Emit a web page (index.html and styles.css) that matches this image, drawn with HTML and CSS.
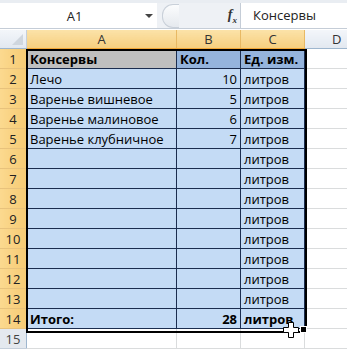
FILE: index.html
```html
<!DOCTYPE html>
<html lang="ru">
<head>
  <meta charset="UTF-8">
  <title>Консервы</title>
  <link rel="stylesheet" href="styles.css">
</head>
<body>
  <div class="fbar">
    <div class="namebox">
      <span class="ref">A1</span>
      <span class="drop"></span>
    </div>
    <div class="mid">
      <span class="knob"></span>
      <span class="fx">f<sub>x</sub></span>
    </div>
    <div class="formula">Консервы</div>
  </div>

  <div class="sheet">
    <table class="grid">
      <tr class="head">
        <th class="corner"><span class="tri"></span></th>
        <th class="sel colA">A</th>
        <th class="sel colB">B</th>
        <th class="sel colC">C</th>
        <th class="colD">D</th>
      </tr>
      <tr>
        <th class="rn">1</th>
        <td class="c title">Консервы</td>
        <td class="c title2">Кол.</td>
        <td class="c title2">Ед. изм.</td>
        <td class="g"></td>
      </tr>
      <tr><th class="rn">2</th><td class="c">Лечо</td><td class="c num">10</td><td class="c">литров</td><td class="g"></td></tr>
      <tr><th class="rn">3</th><td class="c">Варенье вишневое</td><td class="c num">5</td><td class="c">литров</td><td class="g"></td></tr>
      <tr><th class="rn">4</th><td class="c">Варенье малиновое</td><td class="c num">6</td><td class="c">литров</td><td class="g"></td></tr>
      <tr><th class="rn">5</th><td class="c">Варенье клубничное</td><td class="c num">7</td><td class="c">литров</td><td class="g"></td></tr>
      <tr><th class="rn">6</th><td class="c"></td><td class="c"></td><td class="c">литров</td><td class="g"></td></tr>
      <tr><th class="rn">7</th><td class="c"></td><td class="c"></td><td class="c">литров</td><td class="g"></td></tr>
      <tr><th class="rn">8</th><td class="c"></td><td class="c"></td><td class="c">литров</td><td class="g"></td></tr>
      <tr><th class="rn">9</th><td class="c"></td><td class="c"></td><td class="c">литров</td><td class="g"></td></tr>
      <tr><th class="rn">10</th><td class="c"></td><td class="c"></td><td class="c">литров</td><td class="g"></td></tr>
      <tr><th class="rn">11</th><td class="c"></td><td class="c"></td><td class="c">литров</td><td class="g"></td></tr>
      <tr><th class="rn">12</th><td class="c"></td><td class="c"></td><td class="c">литров</td><td class="g"></td></tr>
      <tr><th class="rn">13</th><td class="c"></td><td class="c"></td><td class="c">литров</td><td class="g"></td></tr>
      <tr class="total"><th class="rn">14</th><td class="c">Итого:</td><td class="c num">28</td><td class="c">литров</td><td class="g"></td></tr>
      <tr><th class="rn off">15</th><td class="g"></td><td class="g"></td><td class="g"></td><td class="g"></td></tr>
    </table>

    <div class="selection"></div>
    <div class="handle"></div>
    <svg class="cursor" width="16" height="16" viewBox="0 0 16 16">
      <path d="M5.5 0.5h5v5h5v5h-5v5h-5v-5h-5v-5h5z" fill="#fff" stroke="#000"/>
    </svg>
  </div>
</body>
</html>
```

FILE: styles.css
```css
body {
  margin: 0;
  width: 347px;
  height: 349px;
  overflow: hidden;
  background: #fff;
  font-family: 'Open Sans', 'Liberation Sans', sans-serif;
  color: #000;
}

.fbar {
  display: flex;
  height: 25px;
  padding-top: 3px;
  background: #e9edf2;
  border-bottom: 1px solid #c5cdd7;
}
.namebox {
  width: 157px;
  background: #fff;
  position: relative;
  display: flex;
  align-items: center;
  justify-content: center;
  font-size: 13px;
  color: #222;
}
.namebox .ref {
  margin-left: -8px;
}
.drop {
  position: absolute;
  right: 4px;
  top: 11px;
  border-left: 4px solid transparent;
  border-right: 4px solid transparent;
  border-top: 4px solid #444;
}
.mid {
  width: 83px;
  background: #eef1f5;
  display: flex;
  align-items: center;
  justify-content: space-between;
  padding: 0 3px 0 5px;
  box-sizing: border-box;
}
.knob {
  width: 16px;
  height: 22px;
  border-radius: 11px 0 0 11px;
  border: 1px solid #c9d0d9;
  border-right: none;
  background: linear-gradient(#fbfcfd, #e5e9ee);
}
.fx {
  font-family: 'Liberation Serif', serif;
  font-style: italic;
  font-size: 14px;
  color: #333;
  font-weight: bold;
}
.fx sub {
  font-size: 9px;
}
.formula {
  flex: 1;
  background: #fff;
  border-left: 1px solid #c5cdd7;
  font-size: 13px;
  line-height: 25px;
  padding-left: 12px;
  color: #222;
}

.sheet {
  position: relative;
  margin-top: 1px;
}
.grid {
  width: 347px;
  border-collapse: collapse;
  table-layout: fixed;
  font-size: 13px;
}
.grid th,
.grid td {
  height: 19px;
  padding: 0 3px;
  white-space: nowrap;
  overflow: hidden;
}

.head th {
  height: 18px;
  font-weight: normal;
  font-size: 13px;
  color: #333;
  border-right: 1px solid #c5cfdb;
  border-bottom: 1px solid #9eb6ce;
  background: linear-gradient(#f3f6fa, #e2e8f0);
}
.head .sel {
  background: linear-gradient(#fbe2a8, #f6cf7f);
  border-right: 1px solid #e8b964;
  border-bottom: 1px solid #f2a838;
}
.corner {
  width: 20px;
  position: relative;
}
.tri {
  position: absolute;
  right: 3px;
  bottom: 3px;
  border-left: 11px solid transparent;
  border-bottom: 11px solid #cfd6de;
}
.colA { width: 143px; }
.colB { width: 57px; }
.colC { width: 57px; }
.grid .head .colD {
  text-align: left;
  padding-left: 27px;
  border-right: none;
}

.rn {
  font-weight: normal;
  color: #222;
  background: linear-gradient(90deg, #fbd98f, #f6cb74);
  border-right: 1px solid #f2a838;
  border-bottom: 1px solid #e8c27c;
}
.rn.off {
  background: #e4e9ef;
  border-right: 1px solid #9eb6ce;
  border-bottom: 1px solid #c5cfdb;
  color: #444;
}

.c {
  background: #c4dbf5;
  border: 1px solid #1b2d4f;
}
.title {
  background: #bfbfbf;
  font-weight: bold;
}
.title2 {
  background: #95b4dc;
  font-weight: bold;
}
.num {
  text-align: right;
}
.total td {
  font-weight: bold;
}
.g {
  border-bottom: 1px solid #dadcdd;
}
tr > .g:not(:last-child) {
  border-right: 1px solid #dadcdd;
}

.selection {
  position: absolute;
  left: 26px;
  top: 19px;
  width: 277px;
  height: 280px;
  border: 2px solid #000;
  pointer-events: none;
}
.handle {
  position: absolute;
  left: 300px;
  top: 296px;
  width: 5px;
  height: 5px;
  background: #000;
  border: 1px solid #fff;
}
.cursor {
  position: absolute;
  left: 283px;
  top: 292px;
}
```
